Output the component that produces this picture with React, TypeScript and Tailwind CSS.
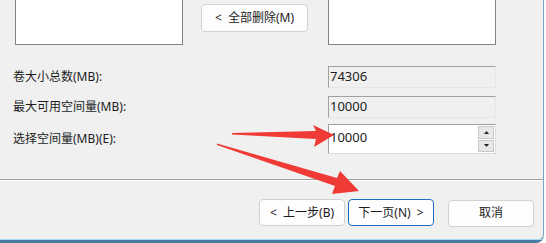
import React from 'react';

const font = { fontFamily: '"Noto Sans", "Noto Sans CJK SC", sans-serif' };

function ListBox() {
  return <div className="w-[168px] h-[45px] bg-white border border-t-0 border-[#828282]" />;
}

function DlgButton({ label, focused }: { label: string; focused?: boolean }) {
  return (
    <button
      className={
        'h-[27px] w-[86px] rounded-[4px] bg-[#fdfdfd] text-[12px] text-[#1b1b1b] leading-none whitespace-pre ' +
        (focused ? 'border border-[#1b6fc1]' : 'border border-[#d1d1d1]')
      }
    >
      {label}
    </button>
  );
}

function Field({ value }: { value: string }) {
  return (
    <div className="w-[168px] h-[22px] bg-[#f0f0f0] border border-[#a0a0a0] border-r-[#e6e6e6] border-b-[#e6e6e6] flex items-center pl-[1px] text-[13px] text-[#1b1b1b]">
      {value}
    </div>
  );
}

function Row({ label, children, className }: { label: string; children: React.ReactNode; className: string }) {
  return (
    <div className={'flex items-center pl-[13px] ' + className}>
      <span className="w-[315px] text-[12px] text-[#1b1b1b]">{label}</span>
      {children}
    </div>
  );
}

function Arrows() {
  return (
    <svg className="absolute left-0 top-0 pointer-events-none" width="546" height="243">
      <polygon
        fill="#ef3a35"
        points="232,133 316,131 313,125 334,135 314,147 316,139 232,134.5"
      />
      <polygon
        fill="#ef3a35"
        points="217,143.5 337,178 340,171 359,191 332,194 335,186 217,145"
      />
    </svg>
  );
}

export default function App() {
  return (
    <div className="w-[546px] h-[243px] bg-white overflow-hidden" style={font}>
      <div className="relative w-[544px] h-[243px] bg-[#f0f0f0] flex flex-col border-b-[3px] border-[#4a7aa0] rounded-br-[8px] border-r border-r-[#7fa3c2]">
        <div className="flex pl-[15px]">
          <ListBox />
          <button className="ml-[18px] mt-[4px] w-[107px] h-[28px] rounded-[4px] bg-[#fdfdfd] border border-[#d1d1d1] text-[12px] text-[#1b1b1b] leading-none whitespace-pre">
            {'<  全部删除(M)'}
          </button>
          <div className="ml-[20px]">
            <ListBox />
          </div>
        </div>

        <Row label="卷大小总数(MB):" className="mt-[21px]">
          <Field value="74306" />
        </Row>
        <Row label="最大可用空间量(MB):" className="mt-[8px]">
          <Field value="10000" />
        </Row>
        <Row label="选择空间量(MB)(E):" className="mt-[6px]">
          <div className="w-[168px] h-[30px] bg-white border border-[#a0a0a0] border-r-[#dcdcdc] border-b-[#dcdcdc] flex">
            <div className="flex-1 pl-[1px] pt-[4px] text-[13px] leading-[16px] text-[#1b1b1b]">10000</div>
            <div className="w-[17px] flex flex-col gap-[1px] py-[1px] pr-[1px]">
              <div className="flex-1 bg-[#e8e8e8] border border-[#c8c8c8] flex items-center justify-center">
                <svg width="5" height="3"><polygon points="2.5,0 5,3 0,3" fill="#222" /></svg>
              </div>
              <div className="flex-1 bg-[#e8e8e8] border border-[#c8c8c8] flex items-center justify-center">
                <svg width="5" height="3"><polygon points="0,0 5,0 2.5,3" fill="#222" /></svg>
              </div>
            </div>
          </div>
        </Row>

        <div className="mt-[25px] border-t border-[#a0a0a0] border-b border-b-white" />

        <div className="flex pl-[259px] pt-[18px] gap-[3px]">
          <DlgButton label="<  上一步(B)" />
          <DlgButton label="下一页(N)  >" focused />
          <div className="ml-[11px]">
            <DlgButton label="取消" />
          </div>
        </div>

        <div className="mt-auto h-[1px] bg-[#a8dcf2]" />
        <Arrows />
      </div>
    </div>
  );
}
